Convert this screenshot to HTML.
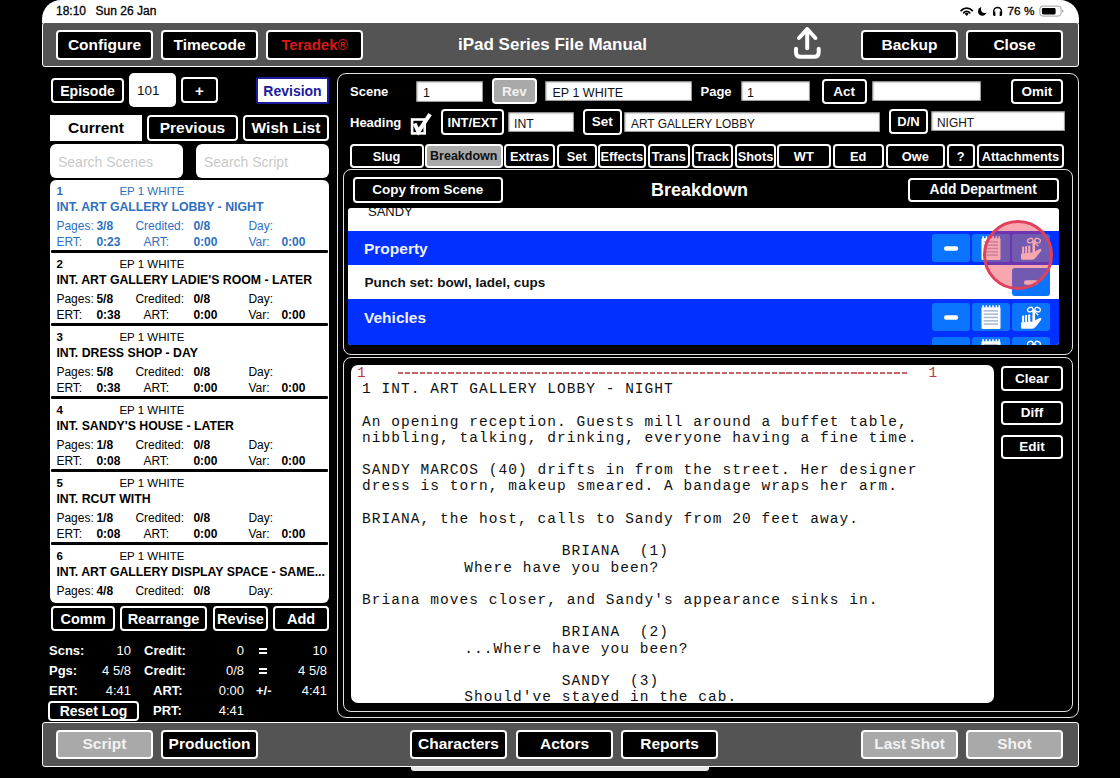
<!DOCTYPE html>
<html><head><meta charset="utf-8">
<style>
*{margin:0;padding:0;box-sizing:border-box}
html,body{width:1120px;height:778px;overflow:hidden;background:#000}
body{position:relative;font-family:"Liberation Sans",sans-serif;color:#fff}
.a{position:absolute}
.status{left:42px;top:0;width:1037px;height:23px;background:#fff;border-radius:19px 19px 0 0;color:#000;font-size:12px;-webkit-text-stroke:0.3px #000}
.tb{position:absolute;left:42px;width:1037px;height:45px;background:#545454;border:1.5px solid #fff;border-radius:3px}
.btn{position:absolute;box-sizing:border-box;border:2px solid #fff;border-radius:4px;background:#000;color:#fff;font-weight:bold;display:flex;align-items:center;justify-content:center;white-space:nowrap}
.gbtn{background:#a9a9a9;color:#f2f2f2}
.inp{position:absolute;background:#fff;color:#111;box-shadow:inset 1px 1px 2px #666, inset -1px -1px 1px #999;font-size:12.5px;white-space:nowrap}
.t{position:absolute;white-space:nowrap;line-height:1}
.sl{position:absolute;white-space:pre;font-family:"Liberation Mono",monospace;font-size:14.5px;letter-spacing:1.044px;line-height:16.21px;color:#111}
</style></head><body>

<!-- status bar -->
<div class="a status">
  <div class="t" style="left:14px;top:5.4px">18:10<span style="position:absolute;left:39.6px">Sun 26 Jan</span></div>
</div>

<!-- top toolbar -->
<div class="tb" style="top:22px"></div>
<div class="btn" style="left:56px;top:30px;width:97px;height:30px;font-size:15.5px">Configure</div>
<div class="btn" style="left:161px;top:30px;width:97px;height:30px;font-size:15.5px">Timecode</div>
<div class="btn" style="left:266px;top:30px;width:97px;height:30px;font-size:15px;color:#d41a1a;padding-bottom:1px">Teradek<span style="font-size:14px">®</span></div>
<div class="t" style="left:458px;top:36px;font-size:17px;font-weight:bold">iPad Series File Manual</div>
<div class="btn" style="left:861px;top:30px;width:97px;height:30px;font-size:15.5px">Backup</div>
<div class="btn" style="left:966px;top:30px;width:97px;height:30px;font-size:15.5px">Close</div>

<!-- bottom toolbar -->
<div class="tb" style="top:722px"></div>
<div class="btn gbtn" style="left:56px;top:730px;width:97px;height:29px;font-size:15.5px;padding-bottom:1px">Script</div>
<div class="btn" style="left:161px;top:730px;width:97px;height:29px;font-size:15.5px;padding-bottom:1px">Production</div>
<div class="btn" style="left:410px;top:730px;width:97px;height:29px;font-size:15.5px;padding-bottom:1px">Characters</div>
<div class="btn" style="left:516px;top:730px;width:97px;height:29px;font-size:15.5px;padding-bottom:1px">Actors</div>
<div class="btn" style="left:621px;top:730px;width:97px;height:29px;font-size:15.5px;padding-bottom:1px">Reports</div>
<div class="btn gbtn" style="left:861px;top:730px;width:97px;height:29px;font-size:15.5px;padding-bottom:1px">Last Shot</div>
<div class="btn gbtn" style="left:966px;top:730px;width:97px;height:29px;font-size:15.5px;padding-bottom:1px">Shot</div>
<div class="a" style="left:411px;top:766.8px;width:298px;height:4.6px;background:#e8e8e8;border-radius:0 0 3px 3px"></div>

<!-- LEFT PANEL -->
<div class="btn" style="left:51px;top:78px;width:73px;height:25px;font-size:14px">Episode</div>
<div class="a" style="left:129px;top:73px;width:47px;height:34px;background:#fff;border-radius:5px"></div>
<div class="t" style="left:137px;top:84px;font-size:13.5px;color:#111">101</div>
<div class="btn" style="left:181px;top:77px;width:37px;height:26px;font-size:15px">+</div>
<div class="btn" style="left:256px;top:77px;width:73px;height:27px;font-size:14px;background:#fff;color:#1b1b9c;border-color:#1b1b9c;border-radius:2px">Revision</div>
<div class="a" style="left:50px;top:115px;width:92px;height:26px;background:#fff;color:#000;font-weight:bold;font-size:15.5px;display:flex;align-items:center;justify-content:center">Current</div>
<div class="btn" style="left:147px;top:115px;width:91px;height:26px;font-size:15.5px">Previous</div>
<div class="btn" style="left:243px;top:115px;width:86px;height:26px;font-size:15.5px">Wish List</div>
<div class="a" style="left:50px;top:144px;width:133px;height:34px;background:#fff;border-radius:6px"></div>
<div class="t" style="left:58px;top:155px;font-size:14px;color:#c9c9c9">Search Scenes</div>
<div class="a" style="left:196px;top:144px;width:133px;height:34px;background:#fff;border-radius:6px"></div>
<div class="t" style="left:204px;top:155px;font-size:14px;color:#c9c9c9">Search Script</div>
<div class="a" style="left:50.4px;top:180px;width:278.6px;height:423px;background:#fff;border-radius:6px;overflow:hidden">
<div class="t" style="left:6px;top:6px;font-size:11.5px;font-weight:bold;color:#2e70bd">1</div>
<div class="t" style="left:69px;top:6px;font-size:11.5px;color:#2e70bd">EP 1 WHITE</div>
<div class="t" style="left:6px;top:21px;font-size:12.3px;font-weight:bold;color:#2e70bd">INT. ART GALLERY LOBBY - NIGHT</div>
<div class="t" style="left:6px;top:40px;font-size:12px;color:#2e70bd">Pages: <b style="position:absolute;left:40px">3/8</b></div>
<div class="t" style="left:85px;top:40px;font-size:12px;color:#2e70bd">Credited: <b style="position:absolute;left:58px">0/8</b></div>
<div class="t" style="left:198px;top:40px;font-size:12px;color:#2e70bd">Day:</div>
<div class="t" style="left:6px;top:56px;font-size:12px;color:#2e70bd">ERT: <b style="position:absolute;left:40px">0:23</b></div>
<div class="t" style="left:93px;top:56px;font-size:12px;color:#2e70bd">ART: <b style="position:absolute;left:50px">0:00</b></div>
<div class="t" style="left:198px;top:56px;font-size:12px;color:#2e70bd">Var: <b style="position:absolute;left:33px">0:00</b></div>
<div class="a" style="left:1.1px;top:70px;width:276.4px;height:3.3px;background:#000;border-radius:1px"></div>
<div class="t" style="left:6px;top:79px;font-size:11.5px;font-weight:bold;color:#000">2</div>
<div class="t" style="left:69px;top:79px;font-size:11.5px;color:#000">EP 1 WHITE</div>
<div class="t" style="left:6px;top:94px;font-size:12.3px;font-weight:bold;color:#000">INT. ART GALLERY LADIE'S ROOM - LATER</div>
<div class="t" style="left:6px;top:113px;font-size:12px;color:#000">Pages: <b style="position:absolute;left:40px">5/8</b></div>
<div class="t" style="left:85px;top:113px;font-size:12px;color:#000">Credited: <b style="position:absolute;left:58px">0/8</b></div>
<div class="t" style="left:198px;top:113px;font-size:12px;color:#000">Day:</div>
<div class="t" style="left:6px;top:129px;font-size:12px;color:#000">ERT: <b style="position:absolute;left:40px">0:38</b></div>
<div class="t" style="left:93px;top:129px;font-size:12px;color:#000">ART: <b style="position:absolute;left:50px">0:00</b></div>
<div class="t" style="left:198px;top:129px;font-size:12px;color:#000">Var: <b style="position:absolute;left:33px">0:00</b></div>
<div class="a" style="left:1.1px;top:143px;width:276.4px;height:3.3px;background:#000;border-radius:1px"></div>
<div class="t" style="left:6px;top:152px;font-size:11.5px;font-weight:bold;color:#000">3</div>
<div class="t" style="left:69px;top:152px;font-size:11.5px;color:#000">EP 1 WHITE</div>
<div class="t" style="left:6px;top:167px;font-size:12.3px;font-weight:bold;color:#000">INT. DRESS SHOP - DAY</div>
<div class="t" style="left:6px;top:186px;font-size:12px;color:#000">Pages: <b style="position:absolute;left:40px">5/8</b></div>
<div class="t" style="left:85px;top:186px;font-size:12px;color:#000">Credited: <b style="position:absolute;left:58px">0/8</b></div>
<div class="t" style="left:198px;top:186px;font-size:12px;color:#000">Day:</div>
<div class="t" style="left:6px;top:202px;font-size:12px;color:#000">ERT: <b style="position:absolute;left:40px">0:38</b></div>
<div class="t" style="left:93px;top:202px;font-size:12px;color:#000">ART: <b style="position:absolute;left:50px">0:00</b></div>
<div class="t" style="left:198px;top:202px;font-size:12px;color:#000">Var: <b style="position:absolute;left:33px">0:00</b></div>
<div class="a" style="left:1.1px;top:216px;width:276.4px;height:3.3px;background:#000;border-radius:1px"></div>
<div class="t" style="left:6px;top:225px;font-size:11.5px;font-weight:bold;color:#000">4</div>
<div class="t" style="left:69px;top:225px;font-size:11.5px;color:#000">EP 1 WHITE</div>
<div class="t" style="left:6px;top:240px;font-size:12.3px;font-weight:bold;color:#000">INT. SANDY'S HOUSE - LATER</div>
<div class="t" style="left:6px;top:259px;font-size:12px;color:#000">Pages: <b style="position:absolute;left:40px">1/8</b></div>
<div class="t" style="left:85px;top:259px;font-size:12px;color:#000">Credited: <b style="position:absolute;left:58px">0/8</b></div>
<div class="t" style="left:198px;top:259px;font-size:12px;color:#000">Day:</div>
<div class="t" style="left:6px;top:275px;font-size:12px;color:#000">ERT: <b style="position:absolute;left:40px">0:08</b></div>
<div class="t" style="left:93px;top:275px;font-size:12px;color:#000">ART: <b style="position:absolute;left:50px">0:00</b></div>
<div class="t" style="left:198px;top:275px;font-size:12px;color:#000">Var: <b style="position:absolute;left:33px">0:00</b></div>
<div class="a" style="left:1.1px;top:289px;width:276.4px;height:3.3px;background:#000;border-radius:1px"></div>
<div class="t" style="left:6px;top:298px;font-size:11.5px;font-weight:bold;color:#000">5</div>
<div class="t" style="left:69px;top:298px;font-size:11.5px;color:#000">EP 1 WHITE</div>
<div class="t" style="left:6px;top:313px;font-size:12.3px;font-weight:bold;color:#000">INT. RCUT WITH</div>
<div class="t" style="left:6px;top:332px;font-size:12px;color:#000">Pages: <b style="position:absolute;left:40px">1/8</b></div>
<div class="t" style="left:85px;top:332px;font-size:12px;color:#000">Credited: <b style="position:absolute;left:58px">0/8</b></div>
<div class="t" style="left:198px;top:332px;font-size:12px;color:#000">Day:</div>
<div class="t" style="left:6px;top:348px;font-size:12px;color:#000">ERT: <b style="position:absolute;left:40px">0:08</b></div>
<div class="t" style="left:93px;top:348px;font-size:12px;color:#000">ART: <b style="position:absolute;left:50px">0:00</b></div>
<div class="t" style="left:198px;top:348px;font-size:12px;color:#000">Var: <b style="position:absolute;left:33px">0:00</b></div>
<div class="a" style="left:1.1px;top:362px;width:276.4px;height:3.3px;background:#000;border-radius:1px"></div>
<div class="t" style="left:6px;top:371px;font-size:11.5px;font-weight:bold;color:#000">6</div>
<div class="t" style="left:69px;top:371px;font-size:11.5px;color:#000">EP 1 WHITE</div>
<div class="t" style="left:6px;top:386px;font-size:12.3px;font-weight:bold;color:#000">INT. ART GALLERY DISPLAY SPACE - SAME...</div>
<div class="t" style="left:6px;top:405px;font-size:12px;color:#000">Pages: <b style="position:absolute;left:40px">4/8</b></div>
<div class="t" style="left:85px;top:405px;font-size:12px;color:#000">Credited: <b style="position:absolute;left:58px">0/8</b></div>
<div class="t" style="left:198px;top:405px;font-size:12px;color:#000">Day:</div>
<div class="a" style="left:1.1px;top:435px;width:276.4px;height:3.3px;background:#000;border-radius:1px"></div>
</div>
<div class="btn" style="left:51px;top:606px;width:64px;height:25px;font-size:14.5px">Comm</div>
<div class="btn" style="left:120px;top:606px;width:87px;height:25px;font-size:14.5px">Rearrange</div>
<div class="btn" style="left:213px;top:606px;width:55px;height:25px;font-size:14.5px">Revise</div>
<div class="btn" style="left:273px;top:606px;width:56px;height:25px;font-size:14.5px">Add</div>
<!-- stats -->
<div class="t" style="left:49px;top:644px;font-size:13px;font-weight:bold">Scns:</div>
<div class="t" style="left:49px;top:664px;font-size:13px;font-weight:bold">Pgs:</div>
<div class="t" style="left:49px;top:684px;font-size:13px;font-weight:bold">ERT:</div>
<div class="t" style="right:989px;top:644px;font-size:13px">10</div>
<div class="t" style="right:989px;top:664px;font-size:13px">4 5/8</div>
<div class="t" style="right:989px;top:684px;font-size:13px">4:41</div>
<div class="t" style="left:144px;top:644px;font-size:13px;font-weight:bold">Credit:</div>
<div class="t" style="left:144px;top:664px;font-size:13px;font-weight:bold">Credit:</div>
<div class="t" style="left:153px;top:684px;font-size:13px;font-weight:bold">ART:</div>
<div class="t" style="left:153px;top:704px;font-size:13px;font-weight:bold">PRT:</div>
<div class="t" style="right:876px;top:644px;font-size:13px">0</div>
<div class="t" style="right:876px;top:664px;font-size:13px">0/8</div>
<div class="t" style="right:876px;top:684px;font-size:13px">0:00</div>
<div class="t" style="right:876px;top:704px;font-size:13px">4:41</div>
<div class="a" style="left:259.3px;top:648.0px;width:7.4px;height:2px;background:#fff"></div><div class="a" style="left:259.3px;top:652.2px;width:7.4px;height:2px;background:#fff"></div>
<div class="a" style="left:259.3px;top:667.7px;width:7.4px;height:2px;background:#fff"></div><div class="a" style="left:259.3px;top:671.9px;width:7.4px;height:2px;background:#fff"></div>
<div class="t" style="left:256px;top:684px;font-size:13px;font-weight:bold">+/-</div>
<div class="t" style="right:793px;top:644px;font-size:13px">10</div>
<div class="t" style="right:793px;top:664px;font-size:13px">4 5/8</div>
<div class="t" style="right:793px;top:684px;font-size:13px">4:41</div>
<div class="btn" style="left:48px;top:701px;width:91px;height:19.5px;font-size:14px;border-width:2px">Reset Log</div>

<!-- RIGHT PANEL -->
<div class="a" style="left:337px;top:73px;width:742px;height:645px;border:1px solid #e2e2e2;border-radius:9px"></div>
<div class="t" style="left:350px;top:84.5px;font-size:13px;font-weight:bold">Scene</div>
<div class="inp" style="left:416px;top:80.5px;width:67px;height:21px"></div>
<div class="t" style="left:423px;top:87px;font-size:12.5px;color:#111">1</div>
<div class="btn gbtn" style="left:492px;top:78px;width:45px;height:26px;font-size:13.5px">Rev</div>
<div class="inp" style="left:545px;top:80.7px;width:147px;height:20.6px"></div>
<div class="t" style="left:552.5px;top:86.8px;font-size:12.5px;color:#111">EP 1 WHITE</div>
<div class="t" style="left:700.5px;top:84.5px;font-size:13px;font-weight:bold">Page</div>
<div class="inp" style="left:740.5px;top:80.7px;width:69px;height:20.6px"></div>
<div class="t" style="left:747px;top:87px;font-size:12.5px;color:#111">1</div>
<div class="btn" style="left:822px;top:79px;width:44.5px;height:25px;font-size:13.5px">Act</div>
<div class="inp" style="left:872px;top:81px;width:109px;height:20px"></div>
<div class="btn" style="left:1011px;top:79px;width:52px;height:25px;font-size:13.5px">Omit</div>

<div class="t" style="left:350px;top:115.8px;font-size:13px;font-weight:bold">Heading</div>
<svg class="a" style="left:405px;top:108px" width="32" height="30" viewBox="0 0 32 30">
<rect x="7.1" y="11.5" width="12.6" height="13.9" fill="none" stroke="#fff" stroke-width="2.6"/>
<path d="M9.6 15.5 L13.4 23.6 L25.1 6.2" fill="none" stroke="#fff" stroke-width="4"/>
</svg>
<div class="btn" style="left:441px;top:109px;width:63px;height:26px;font-size:13px">INT/EXT</div>
<div class="inp" style="left:507.5px;top:112px;width:66.5px;height:20px"></div>
<div class="t" style="left:514px;top:118.3px;font-size:12.2px;color:#111">INT</div>
<div class="btn" style="left:582.5px;top:109px;width:39.5px;height:25.5px;font-size:13.5px">Set</div>
<div class="inp" style="left:624px;top:112px;width:256px;height:20px"></div>
<div class="t" style="left:631px;top:118.6px;font-size:11.9px;color:#111">ART GALLERY LOBBY</div>
<div class="btn" style="left:889px;top:109px;width:39px;height:25px;font-size:13px">D/N</div>
<div class="inp" style="left:931px;top:111px;width:134px;height:20px"></div>
<div class="t" style="left:937px;top:117.8px;font-size:11.9px;color:#111">NIGHT</div>

<!-- tabs -->
<div class="btn" style="left:349.5px;top:144px;width:74px;height:24px;font-size:12.8px;border-width:2px">Slug</div>
<div class="btn gbtn" style="left:424.5px;top:144px;width:78.5px;height:24px;font-size:12.5px;border-width:2px;color:#111">Breakdown</div>
<div class="btn" style="left:504px;top:144px;width:51px;height:24px;font-size:12.8px;border-width:2px">Extras</div>
<div class="btn" style="left:557px;top:144px;width:39.5px;height:24px;font-size:12.8px;border-width:2px">Set</div>
<div class="btn" style="left:597.5px;top:144px;width:48.5px;height:24px;font-size:12.8px;border-width:2px">Effects</div>
<div class="btn" style="left:648px;top:144px;width:41.5px;height:24px;font-size:12.8px;border-width:2px">Trans</div>
<div class="btn" style="left:691.5px;top:144px;width:41.5px;height:24px;font-size:12.8px;border-width:2px">Track</div>
<div class="btn" style="left:735px;top:144px;width:41px;height:24px;font-size:12.8px;border-width:2px">Shots</div>
<div class="btn" style="left:777px;top:144px;width:53.5px;height:24px;font-size:12.8px;border-width:2px">WT</div>
<div class="btn" style="left:833px;top:144px;width:50.5px;height:24px;font-size:12.8px;border-width:2px">Ed</div>
<div class="btn" style="left:885.5px;top:144px;width:59.5px;height:24px;font-size:12.8px;border-width:2px">Owe</div>
<div class="btn" style="left:946.5px;top:144px;width:28.5px;height:24px;font-size:12.8px;border-width:2px">?</div>
<div class="btn" style="left:977px;top:144px;width:87px;height:24px;font-size:12.8px;border-width:2px">Attachments</div>

<!-- breakdown panel -->
<div class="a" style="left:343px;top:168.6px;width:729.5px;height:186px;border:1px solid #e2e2e2;border-radius:8px"></div>
<div class="btn" style="left:352.5px;top:177px;width:150.5px;height:25.5px;font-size:13.5px">Copy from Scene</div>
<div class="t" style="left:651px;top:181px;font-size:18px;font-weight:bold">Breakdown</div>
<div class="btn" style="left:908px;top:177.5px;width:150.5px;height:24.5px;font-size:13.8px">Add Department</div>
<div class="a" style="left:347.5px;top:208px;width:711px;height:136.5px;background:#fff;border-radius:3px;overflow:hidden">
<div class="t" style="left:20.5px;top:-2.9px;font-size:13px;color:#111">SANDY</div>
<div class="a" style="left:0;top:22.7px;width:711px;height:34.3px;background:#0230fe"></div>
<div class="t" style="left:16.5px;top:32.9px;font-size:15.5px;font-weight:bold;color:#eef0ff">Property</div>
<div class="a" style="left:584.3px;top:26.2px;width:38px;height:28px;background:#0a74ff;border-radius:3px"><svg width="38" height="28" style="position:absolute;left:0;top:0"><rect x="12" y="12.3" width="14.2" height="4.4" rx="2.2" fill="#fff"/></svg></div><div class="a" style="left:624.5px;top:26.2px;width:38px;height:28px;background:#0a74ff;border-radius:3px"><svg width="38" height="28" style="position:absolute;left:0;top:0">
<rect x="9.5" y="4.3" width="19" height="21.6" rx="1.2" fill="#fff"/>
<path d="M10.3 2.3h1.6v2.5h-1.6zM13.6 2.3h1.6v2.5h-1.6zM16.9 2.3h1.6v2.5h-1.6zM20.2 2.3h1.6v2.5h-1.6zM23.5 2.3h1.6v2.5h-1.6zM26.4 2.3h1.6v2.5h-1.6z" fill="#fff"/>
<g fill="#a6b8d6"><rect x="11.6" y="7.1" width="14.4" height="1.5"/><rect x="11.6" y="10.4" width="14.4" height="1.5"/><rect x="11.6" y="13.7" width="14.4" height="1.5"/><rect x="11.6" y="17.1" width="14.4" height="1.5"/><rect x="11.6" y="20.3" width="14.4" height="1.5"/></g>
</svg></div><div class="a" style="left:664px;top:26.2px;width:38px;height:28px;background:#0a74ff;border-radius:3px"><svg width="38" height="28" style="position:absolute;left:0;top:0">
<g fill="#fff">
<rect x="10.1" y="12.6" width="2.0" height="7" rx="0.6"/>
<rect x="13.1" y="11.9" width="2.0" height="7.6" rx="0.6"/>
<rect x="16.1" y="11.6" width="2.2" height="7.8" rx="0.6"/>
<rect x="20.4" y="6.6" width="2.7" height="12.6" rx="0.8"/>
<path d="M9 19.4 L21 18.6 L27.6 14.9 Q29.7 14.3 29.2 16.7 L23.5 23.9 Q21.8 25.8 19 25.8 L10.5 25.8 Q9 25.8 9 24.3 Z"/>
</g>
<g fill="none" stroke="#fff" stroke-width="1.3">
<ellipse cx="18.3" cy="6.6" rx="2.8" ry="2.2" transform="rotate(-18 18.3 6.6)"/>
<ellipse cx="25.6" cy="6.6" rx="2.8" ry="2.2" transform="rotate(18 25.6 6.6)"/>
<path d="M22.6 8.6 L26.4 12.2"/>
</g>
</svg></div>
<div class="a" style="left:0;top:91.3px;width:711px;height:60px;background:#0230fe"></div>
<div class="t" style="left:17px;top:67.8px;font-size:13.5px;font-weight:bold;color:#111">Punch set: bowl, ladel, cups</div>
<div class="a" style="left:664px;top:60px;width:38px;height:28.25px;background:#0a74ff;border-radius:3px"><svg width="38" height="28" style="position:absolute;left:0;top:0"><rect x="12" y="12.3" width="14.2" height="4.4" rx="2.2" fill="#fff"/></svg></div>
<div class="t" style="left:16.5px;top:102px;font-size:15.5px;font-weight:bold;color:#eef0ff">Vehicles</div>
<div class="a" style="left:584.3px;top:94.5px;width:38px;height:28px;background:#0a74ff;border-radius:3px"><svg width="38" height="28" style="position:absolute;left:0;top:0"><rect x="12" y="12.3" width="14.2" height="4.4" rx="2.2" fill="#fff"/></svg></div><div class="a" style="left:624.5px;top:94.5px;width:38px;height:28px;background:#0a74ff;border-radius:3px"><svg width="38" height="28" style="position:absolute;left:0;top:0">
<rect x="9.5" y="4.3" width="19" height="21.6" rx="1.2" fill="#fff"/>
<path d="M10.3 2.3h1.6v2.5h-1.6zM13.6 2.3h1.6v2.5h-1.6zM16.9 2.3h1.6v2.5h-1.6zM20.2 2.3h1.6v2.5h-1.6zM23.5 2.3h1.6v2.5h-1.6zM26.4 2.3h1.6v2.5h-1.6z" fill="#fff"/>
<g fill="#a6b8d6"><rect x="11.6" y="7.1" width="14.4" height="1.5"/><rect x="11.6" y="10.4" width="14.4" height="1.5"/><rect x="11.6" y="13.7" width="14.4" height="1.5"/><rect x="11.6" y="17.1" width="14.4" height="1.5"/><rect x="11.6" y="20.3" width="14.4" height="1.5"/></g>
</svg></div><div class="a" style="left:664px;top:94.5px;width:38px;height:28px;background:#0a74ff;border-radius:3px"><svg width="38" height="28" style="position:absolute;left:0;top:0">
<g fill="#fff">
<rect x="10.1" y="12.6" width="2.0" height="7" rx="0.6"/>
<rect x="13.1" y="11.9" width="2.0" height="7.6" rx="0.6"/>
<rect x="16.1" y="11.6" width="2.2" height="7.8" rx="0.6"/>
<rect x="20.4" y="6.6" width="2.7" height="12.6" rx="0.8"/>
<path d="M9 19.4 L21 18.6 L27.6 14.9 Q29.7 14.3 29.2 16.7 L23.5 23.9 Q21.8 25.8 19 25.8 L10.5 25.8 Q9 25.8 9 24.3 Z"/>
</g>
<g fill="none" stroke="#fff" stroke-width="1.3">
<ellipse cx="18.3" cy="6.6" rx="2.8" ry="2.2" transform="rotate(-18 18.3 6.6)"/>
<ellipse cx="25.6" cy="6.6" rx="2.8" ry="2.2" transform="rotate(18 25.6 6.6)"/>
<path d="M22.6 8.6 L26.4 12.2"/>
</g>
</svg></div>
<div class="a" style="left:584.3px;top:128.9px;width:38px;height:28px;background:#0a74ff;border-radius:3px"><svg width="38" height="28" style="position:absolute;left:0;top:0"><rect x="12" y="12.3" width="14.2" height="4.4" rx="2.2" fill="#fff"/></svg></div><div class="a" style="left:624.5px;top:128.9px;width:38px;height:28px;background:#0a74ff;border-radius:3px"><svg width="38" height="28" style="position:absolute;left:0;top:0">
<rect x="9.5" y="4.3" width="19" height="21.6" rx="1.2" fill="#fff"/>
<path d="M10.3 2.3h1.6v2.5h-1.6zM13.6 2.3h1.6v2.5h-1.6zM16.9 2.3h1.6v2.5h-1.6zM20.2 2.3h1.6v2.5h-1.6zM23.5 2.3h1.6v2.5h-1.6zM26.4 2.3h1.6v2.5h-1.6z" fill="#fff"/>
<g fill="#a6b8d6"><rect x="11.6" y="7.1" width="14.4" height="1.5"/><rect x="11.6" y="10.4" width="14.4" height="1.5"/><rect x="11.6" y="13.7" width="14.4" height="1.5"/><rect x="11.6" y="17.1" width="14.4" height="1.5"/><rect x="11.6" y="20.3" width="14.4" height="1.5"/></g>
</svg></div><div class="a" style="left:664px;top:128.9px;width:38px;height:28px;background:#0a74ff;border-radius:3px"><svg width="38" height="28" style="position:absolute;left:0;top:0">
<g fill="#fff">
<rect x="10.1" y="12.6" width="2.0" height="7" rx="0.6"/>
<rect x="13.1" y="11.9" width="2.0" height="7.6" rx="0.6"/>
<rect x="16.1" y="11.6" width="2.2" height="7.8" rx="0.6"/>
<rect x="20.4" y="6.6" width="2.7" height="12.6" rx="0.8"/>
<path d="M9 19.4 L21 18.6 L27.6 14.9 Q29.7 14.3 29.2 16.7 L23.5 23.9 Q21.8 25.8 19 25.8 L10.5 25.8 Q9 25.8 9 24.3 Z"/>
</g>
<g fill="none" stroke="#fff" stroke-width="1.3">
<ellipse cx="18.3" cy="6.6" rx="2.8" ry="2.2" transform="rotate(-18 18.3 6.6)"/>
<ellipse cx="25.6" cy="6.6" rx="2.8" ry="2.2" transform="rotate(18 25.6 6.6)"/>
<path d="M22.6 8.6 L26.4 12.2"/>
</g>
</svg></div>
</div>

<!-- script panel -->
<div class="a" style="left:343px;top:357.2px;width:729.5px;height:354.6px;border:1px solid #e2e2e2;border-radius:8px"></div>
<div class="a" style="left:351px;top:365px;width:642.5px;height:337.5px;background:#fff;border-radius:7px;overflow:hidden">
<div class="t" style="left:6px;top:1.3px;font-family:'Liberation Mono',monospace;font-size:14.5px;color:#b8393e">1</div>
<div class="a" style="left:46.8px;top:7px;width:509px;height:2px;background:repeating-linear-gradient(90deg,#c9636a 0,#c9636a 5.3px,transparent 5.3px,transparent 7.194px)"></div>
<div class="t" style="left:577.5px;top:1.3px;font-family:'Liberation Mono',monospace;font-size:14.5px;color:#b8393e">1</div>
<div class="sl" style="left:11.00px;top:16.20px">1 INT. ART GALLERY LOBBY - NIGHT</div>
<div class="sl" style="left:11.00px;top:48.62px">An opening reception. Guests mill around a buffet table,</div>
<div class="sl" style="left:11.00px;top:64.83px">nibbling, talking, drinking, everyone having a fine time.</div>
<div class="sl" style="left:11.00px;top:97.25px">SANDY MARCOS (40) drifts in from the street. Her designer</div>
<div class="sl" style="left:11.00px;top:113.46px">dress is torn, makeup smeared. A bandage wraps her arm.</div>
<div class="sl" style="left:11.00px;top:145.88px">BRIANA, the host, calls to Sandy from 20 feet away.</div>
<div class="sl" style="left:210.75px;top:178.30px">BRIANA  (1)</div>
<div class="sl" style="left:113.30px;top:194.51px">Where have you been?</div>
<div class="sl" style="left:11.00px;top:226.93px">Briana moves closer, and Sandy&#39;s appearance sinks in.</div>
<div class="sl" style="left:210.75px;top:259.35px">BRIANA  (2)</div>
<div class="sl" style="left:113.30px;top:275.56px">...Where have you been?</div>
<div class="sl" style="left:210.75px;top:307.98px">SANDY  (3)</div>
<div class="sl" style="left:113.30px;top:324.19px">Should&#39;ve stayed in the cab.</div>
</div>
<div class="btn" style="left:1001px;top:366px;width:62px;height:24.5px;font-size:13.5px">Clear</div>
<div class="btn" style="left:1001px;top:400.5px;width:62px;height:24.5px;font-size:13.5px">Diff</div>
<div class="btn" style="left:1001px;top:434.5px;width:62px;height:24.5px;font-size:13.5px">Edit</div>

<!-- share icon -->
<svg class="a" style="left:785px;top:24px" width="45" height="38" viewBox="0 0 45 38">
<g fill="none" stroke="#fff" stroke-width="4" stroke-linecap="round" stroke-linejoin="round">
<path d="M22.2 5.5 L22.2 24.2"/>
<path d="M14 14 L22.2 5.2 L30.4 14"/>
<path d="M11 24.8 L11 28.4 Q11 32.8 15.4 32.8 L29.3 32.8 Q33.7 32.8 33.7 28.4 L33.7 24.8"/>
</g></svg>
<!-- status icons -->
<svg class="a" style="left:956px;top:2px" width="112" height="18" viewBox="0 0 112 18">
<g fill="none" stroke="#000" stroke-width="1.75" stroke-linecap="round">
<path d="M5.11 8.61 A7.3 7.3 0 0 1 16.29 8.61"/>
<path d="M7.64 10.73 A4.0 4.0 0 0 1 13.76 10.73"/>
</g>
<path d="M10.7 13.9 L8.65 11.85 A2.9 2.9 0 0 1 12.75 11.85 Z" fill="#000"/>
<circle cx="26.3" cy="9.4" r="4.3" fill="#000"/>
<circle cx="28.9" cy="7.0" r="3.9" fill="#fff"/>
<path d="M37.7 12 L37.7 9.3 A3.85 3.85 0 0 1 45.4 9.3 L45.4 12" fill="none" stroke="#000" stroke-width="1.4"/>
<path d="M37 9.6 L39.4 9.6 L39.4 13.9 L38.1 13.9 Q37 13.9 37 12.8 Z" fill="#000"/>
<path d="M46.1 9.6 L43.7 9.6 L43.7 13.9 L45 13.9 Q46.1 13.9 46.1 12.8 Z" fill="#000"/>
<rect x="83.9" y="4.1" width="21.2" height="10" rx="2.8" fill="none" stroke="#a0a0a0" stroke-width="1"/>
<rect x="85.9" y="6.1" width="13.7" height="6.3" rx="1.3" fill="#000"/>
<path d="M106.2 7.6 Q107.6 8.1 107.6 9.1 Q107.6 10.1 106.2 10.6 Z" fill="#a0a0a0"/>
</svg>
<div class="t" style="left:1007.5px;top:6.2px;font-size:11.8px;color:#000;-webkit-text-stroke:0.3px #000">76 %</div>
<!-- touch indicator -->
<div class="a" style="left:982.7px;top:219.9px;width:70px;height:70px;border-radius:50%;background:rgba(240,60,80,0.45);border:3px solid #e0405c"></div>

</body></html>
